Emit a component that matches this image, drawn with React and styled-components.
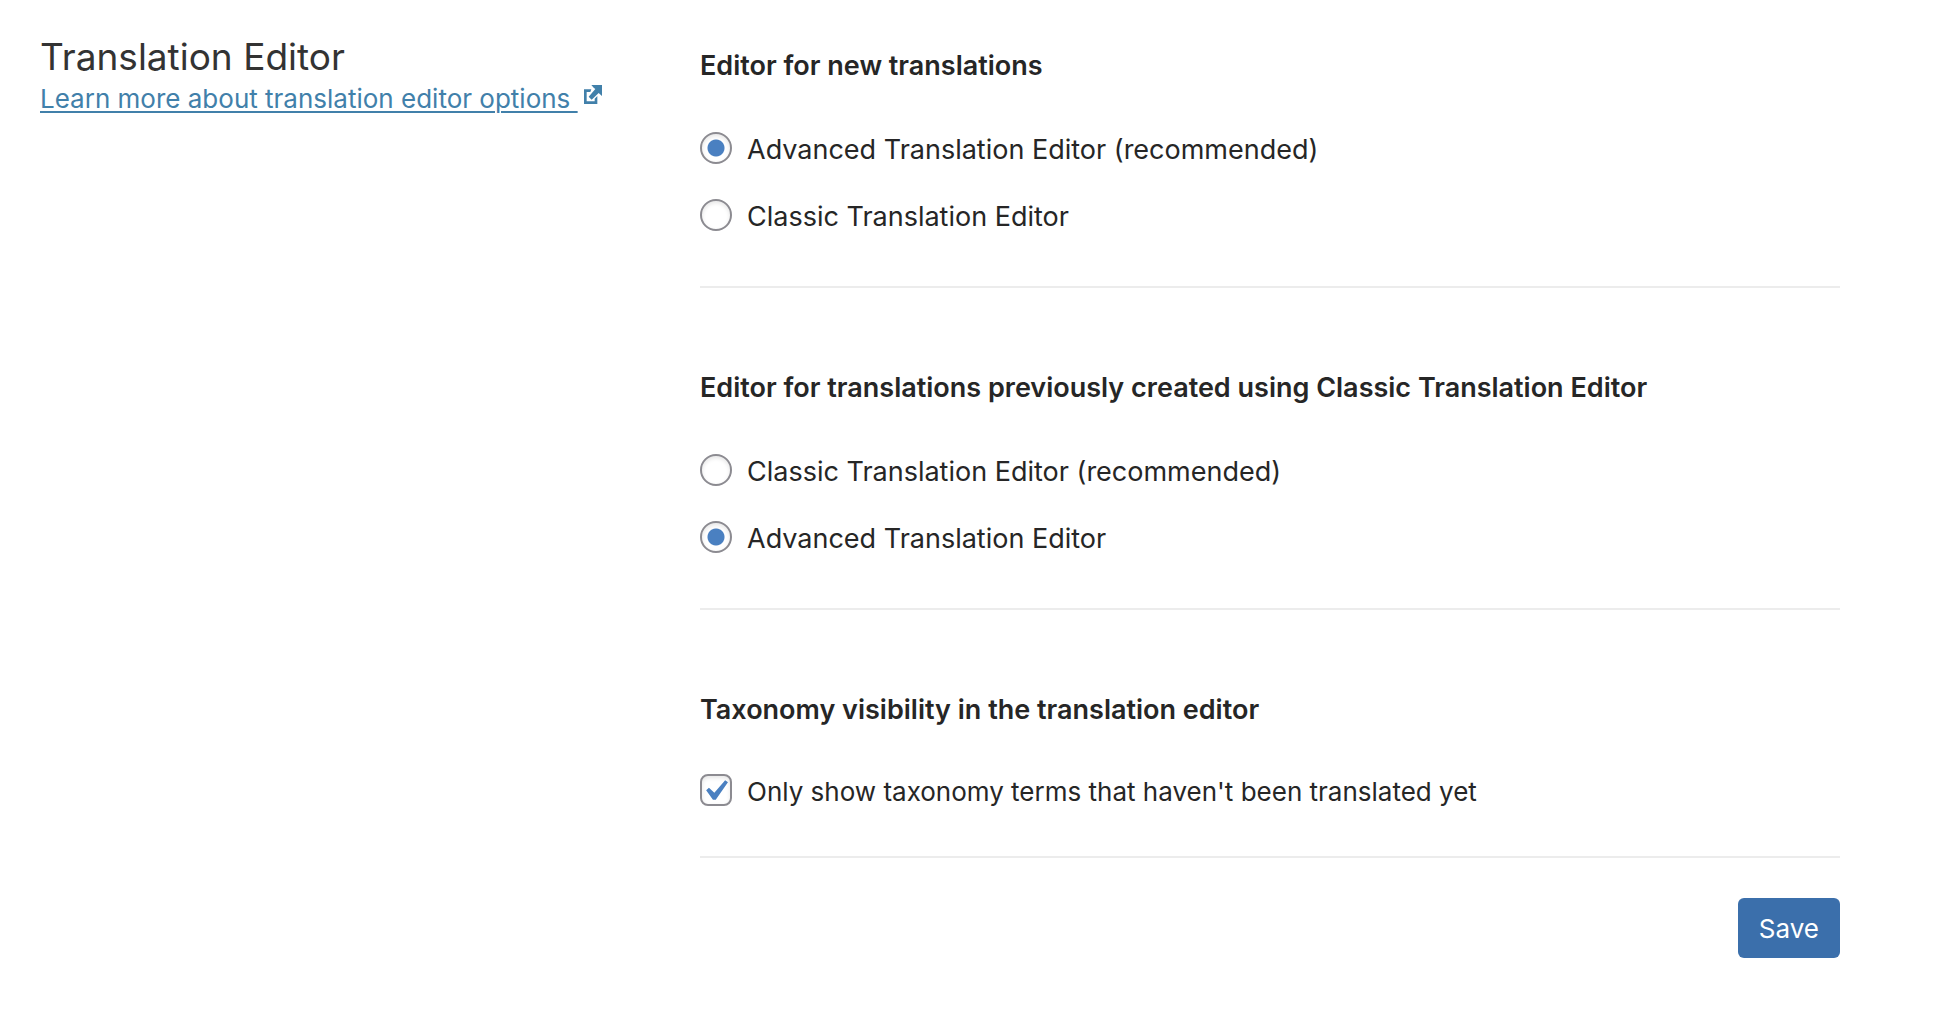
import React, { useState } from "react";
import styled, { createGlobalStyle, css } from "styled-components";

const GlobalStyle = createGlobalStyle`
  * { box-sizing: border-box; }
  body {
    margin: 0;
    background: #fff;
    color: #262626;
    font-family: Inter, "Noto Sans", sans-serif;
    font-size: 27px;
    line-height: 40px;
  }
`;

const Page = styled.main`
  display: grid;
  grid-template-columns: 11fr 19fr;
  padding: 36px 96px 54px 40px;
`;

const Intro = styled.header`
  display: flex;
  flex-direction: column;
  align-items: flex-start;
`;

const Title = styled.h1`
  margin: 0;
  font-size: 37px;
  font-weight: 400;
  line-height: 42px;
  color: #333;
`;

const HelpLink = styled.a`
  display: flex;
  align-items: flex-start;
  gap: 6px;
  font-size: 26px;
  line-height: 42px;
  color: #4180aa;
  text-decoration: none;
`;

const HelpText = styled.span`
  white-space: pre;
  text-decoration: underline;
  text-decoration-thickness: 2px;
  text-underline-offset: 3px;
`;

const ExternalIcon = styled.svg`
  width: 18px;
  height: 19px;
  margin-top: 7px;
  fill: currentColor;
`;

const Settings = styled.form`
  display: flex;
  flex-direction: column;
  padding-top: 10px;
`;

const Section = styled.section`
  display: flex;
  flex-direction: column;
  padding-bottom: ${(p) => (p.$compact ? 44 : 49)}px;
  border-bottom: 2px solid #ececec;

  & + & {
    padding-top: 80px;
  }
`;

const SectionTitle = styled.h2`
  margin: 0 0 ${(p) => (p.$compact ? 42 : 44)}px;
  font-size: 27px;
  font-weight: 600;
  line-height: 40px;
`;

const Options = styled.div`
  display: flex;
  flex-direction: column;
  align-items: flex-start;
  gap: 27px;
`;

const Option = styled.label`
  display: flex;
  align-items: flex-start;
  gap: 15px;
  font-size: ${(p) => (p.$compact ? 26 : 27)}px;
`;

const control = css`
  appearance: none;
  flex: none;
  width: 32px;
  height: 32px;
  margin: 2px 0 0;
  border: 2px solid #8c8b91;
  background-color: #fff;
  box-shadow: inset 0 2px 4px rgba(0, 0, 0, 0.1);
`;

const Radio = styled.input`
  ${control}
  border-radius: 50%;

  &:checked {
    background-image: radial-gradient(circle, #4a80c1 8px, transparent 9px);
  }
`;

const Checkbox = styled.input`
  ${control}
  border-radius: 8px;

  &:checked {
    background-image: url("data:image/svg+xml,%3Csvg xmlns='http://www.w3.org/2000/svg' viewBox='0 0 20 20'%3E%3Cpath d='M14.83 4.89l1.34.94-5.81 8.38H9.02L5.78 9.67l1.34-1.25 2.57 2.4z' fill='%234a80c1'/%3E%3C/svg%3E");
    background-repeat: no-repeat;
    background-position: -8px -6px;
    background-size: 42px 42px;
  }
`;

const Actions = styled.div`
  display: flex;
  justify-content: flex-end;
  padding-top: 40px;
`;

const SaveButton = styled.button`
  min-height: 60px;
  padding: 2px 21px 0;
  border: 0;
  border-radius: 6px;
  background: #3b6fab;
  color: #fff;
  font-family: inherit;
  font-size: 26px;
  line-height: 40px;
`;

function RadioSection({ name, title, options, initial }) {
  const [value, setValue] = useState(initial);
  return (
    <Section role="radiogroup" aria-labelledby={`${name}-title`}>
      <SectionTitle id={`${name}-title`}>{title}</SectionTitle>
      <Options>
        {options.map((option) => (
          <Option key={option.value} htmlFor={`${name}-${option.value}`}>
            <Radio
              type="radio"
              id={`${name}-${option.value}`}
              name={name}
              checked={value === option.value}
              onChange={() => setValue(option.value)}
            />
            <span>{option.label}</span>
          </Option>
        ))}
      </Options>
    </Section>
  );
}

export default function App() {
  const [onlyUntranslated, setOnlyUntranslated] = useState(true);

  return (
    <>
      <GlobalStyle />
      <Page>
        <Intro>
          <Title>Translation Editor</Title>
          <HelpLink href="#editor-options">
            <HelpText>{"Learn more about translation editor options "}</HelpText>
            <ExternalIcon viewBox="0 0 54 57" aria-hidden="true">
              <path d="M22 13H0V57H40V33L32 41V49H8V21H19z" />
              <path d="M22 0H54V33L44 24L23 44L14 35L34 12L29 8z" />
            </ExternalIcon>
          </HelpLink>
        </Intro>

        <Settings onSubmit={(event) => event.preventDefault()}>
          <RadioSection
            name="new"
            title="Editor for new translations"
            initial="advanced"
            options={[
              { value: "advanced", label: "Advanced Translation Editor (recommended)" },
              { value: "classic", label: "Classic Translation Editor" },
            ]}
          />
          <RadioSection
            name="previous"
            title="Editor for translations previously created using Classic Translation Editor"
            initial="advanced"
            options={[
              { value: "classic", label: "Classic Translation Editor (recommended)" },
              { value: "advanced", label: "Advanced Translation Editor" },
            ]}
          />
          <Section $compact>
            <SectionTitle $compact>Taxonomy visibility in the translation editor</SectionTitle>
            <Options>
              <Option $compact htmlFor="taxonomy">
                <Checkbox
                  type="checkbox"
                  id="taxonomy"
                  checked={onlyUntranslated}
                  onChange={(event) => setOnlyUntranslated(event.target.checked)}
                />
                <span>Only show taxonomy terms that haven't been translated yet</span>
              </Option>
            </Options>
          </Section>
          <Actions>
            <SaveButton type="submit">Save</SaveButton>
          </Actions>
        </Settings>
      </Page>
    </>
  );
}
